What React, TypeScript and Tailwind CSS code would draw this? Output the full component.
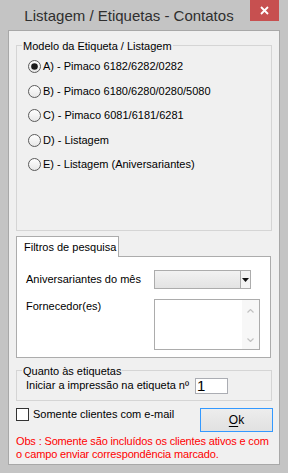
import React from "react";

function Radio({ checked }: { checked?: boolean }) {
  return (
    <svg width="13" height="13" viewBox="0 0 13 13" className="shrink-0">
      <defs>
        <linearGradient id="rg" x1="0" y1="0" x2="0" y2="1">
          <stop offset="0" stopColor="#ffffff" />
          <stop offset="1" stopColor="#e6e6e6" />
        </linearGradient>
      </defs>
      <circle cx="6.5" cy="6.5" r="6" fill="url(#rg)" stroke="#5a5a5a" strokeWidth="1" />
      {checked && <circle cx="6.5" cy="6.5" r="3.3" fill="#1a1a1a" />}
    </svg>
  );
}

const models = [
  "A) - Pimaco 6182/6282/0282",
  "B) - Pimaco 6180/6280/0280/5080",
  "C) - Pimaco 6081/6181/6281",
  "D) - Listagem",
  "E) - Listagem (Aniversariantes)",
];

export default function App() {
  return (
    <div className="w-[288px] h-[473px] bg-[#c4c4c4] flex flex-col font-['Liberation_Sans',Arial,sans-serif] text-black">
      <div className="h-[30px] flex items-start shrink-0">
        <div className="flex-1 pl-[8px] pt-[6px] text-center text-[15px] leading-[20px] text-[#2f2f2f]">
          Listagem / Etiquetas - Contatos
        </div>
        <div className="w-[29px] h-[21px] mr-[9px] bg-[#c75050] flex items-center justify-center">
          <svg width="9" height="9" viewBox="0 0 9 9">
            <path d="M1 1L8 8M8 1L1 8" stroke="white" strokeWidth="1.8" />
          </svg>
        </div>
      </div>

      <div className="mx-[8px] h-[435px] bg-[#f0f0f0] border border-[#a8a8a8] px-[7px] flex flex-col text-[11px] leading-[13px]">
        {/* Group 1 */}
        <div className="mt-[14px] h-[186px] border border-[#d5d5d5] relative flex flex-col pt-[14px] gap-[11.5px] pl-[11px]">
          <span className="absolute left-[5px] top-[-6px] px-[1px] bg-[#f0f0f0]">
            Modelo da Etiqueta / Listagem
          </span>
          {models.map((m, i) => (
            <div key={m} className="flex items-center gap-[2px] h-[13px]">
              <Radio checked={i === 0} />
              <span>{m}</span>
            </div>
          ))}
        </div>

        {/* Tab */}
        <div className="mt-[5px] flex flex-col">
          <div className="self-start w-[103px] h-[21px] border border-b-0 border-[#acacac] bg-white relative z-10 -mb-[1px] pl-[7px] pt-[4px]">
            Filtros de pesquisa
          </div>
          <div className="w-[255px] h-[102px] border border-[#acacac] bg-white pl-[9px] pt-[13px] flex flex-col">
            <div className="flex items-center h-[19px]">
              <span className="w-[128px]">Aniversariantes do mês</span>
              <div className="w-[97px] h-[19px] border border-[#acacac] flex">
                <div className="flex-1 bg-gradient-to-b from-[#f2f2f2] to-[#e3e3e3]" />
                <div className="w-[10px] border-l border-[#acacac] bg-[#f4f4f4] flex items-center justify-center">
                  <svg width="7" height="4" viewBox="0 0 7 4">
                    <path d="M0 0H7L3.5 4Z" fill="#111" />
                  </svg>
                </div>
              </div>
            </div>
            <div className="mt-[10px] flex items-start">
              <span className="w-[128px] pt-[1px]">Fornecedor(es)</span>
              <div className="w-[106px] h-[51px] border border-[#acacac] bg-white flex justify-end">
                <div className="w-[17px] bg-[#f7f7f7] flex flex-col items-center justify-between pt-[9px] pb-[7px]">
                  <svg width="7" height="4" viewBox="0 0 7 4">
                    <path d="M0.5 3.5L3.5 0.5L6.5 3.5" stroke="#c2c2c2" strokeWidth="1.2" fill="none" />
                  </svg>
                  <svg width="7" height="4" viewBox="0 0 7 4">
                    <path d="M0.5 0.5L3.5 3.5L6.5 0.5" stroke="#c2c2c2" strokeWidth="1.2" fill="none" />
                  </svg>
                </div>
              </div>
            </div>
          </div>
        </div>

        {/* Group 2 */}
        <div className="mt-[12px] h-[31px] border border-[#d5d5d5] relative flex items-center pl-[9px]">
          <span className="absolute left-[5px] top-[-6px] px-[1px] bg-[#f0f0f0]">Quanto às etiquetas</span>
          <span>Iniciar a impressão na etiqueta nº</span>
          <div className="ml-[6px] w-[33px] h-[16px] border border-[#abadb3] bg-white text-[15px] leading-[14px] pl-[1px]">
            1
          </div>
        </div>

        {/* Checkbox + Ok */}
        <div className="mt-[7px] flex justify-between items-start mr-[-1px]">
          <div className="flex items-center gap-[4px] h-[13px]">
            <div className="w-[13px] h-[13px] border border-[#333] bg-white" />
            <span>Somente clientes com e-mail</span>
          </div>
          <div className="w-[73px] h-[24px] border border-[#3399ff] bg-gradient-to-b from-[#ededed] to-[#e1e1e1] flex items-center justify-center text-[12px]">
            <span>
              <span className="underline underline-offset-[2px]">O</span>k
            </span>
          </div>
        </div>

        <div className="mt-[3px] text-[#ff0000] whitespace-nowrap tracking-[-0.15px]">
          Obs : Somente são incluídos os clientes ativos e com
          <br />o campo enviar correspondência marcado.
        </div>
      </div>
    </div>
  );
}
